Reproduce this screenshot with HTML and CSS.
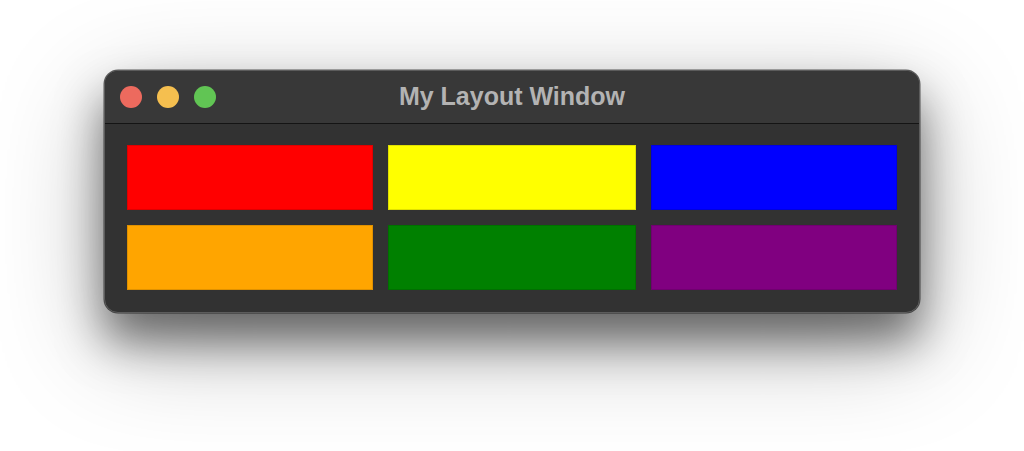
FILE: index.html
```html
<!DOCTYPE html>
<html lang="en">
<head>
<meta charset="utf-8">
<title>My Layout Window</title>
<link rel="stylesheet" href="styles.css">
</head>
<body>
  <div class="window">
    <div class="titlebar">
      <div class="lights">
        <span class="light close"></span>
        <span class="light minimize"></span>
        <span class="light zoom"></span>
      </div>
      <div class="title">My Layout Window</div>
      <div class="spacer"></div>
    </div>
    <div class="content">
      <div class="cell red"></div>
      <div class="cell yellow"></div>
      <div class="cell blue"></div>
      <div class="cell orange"></div>
      <div class="cell green"></div>
      <div class="cell purple"></div>
    </div>
  </div>
</body>
</html>
```

FILE: styles.css
```css
html {
  margin: 0;
  height: 100%;
  background: #ffffff;
}

body {
  margin: 0;
  box-sizing: border-box;
  min-height: 100%;
  padding: 70px 0 0 104px;
  background: #ffffff;
  font-family: "Liberation Sans", Arial, sans-serif;
}

.window {
  box-sizing: border-box;
  width: 816px;
  border: 1px solid #5c5c5c;
  border-radius: 14px;
  background: #323232;
  overflow: hidden;
  box-shadow:
    0 0 0 0.5px rgba(0, 0, 0, 0.6),
    0 28px 45px rgba(0, 0, 0, 0.5),
    0 30px 110px rgba(0, 0, 0, 0.28);
}

.titlebar {
  height: 52px;
  background: #383838;
  border-bottom: 1px solid #141414;
  display: grid;
  grid-template-columns: 1fr auto 1fr;
  align-items: center;
}

.lights {
  display: flex;
  gap: 15px;
  padding-left: 15px;
  align-items: center;
}

.light {
  width: 22px;
  height: 22px;
  border-radius: 50%;
  display: block;
}

.close { background: #ed6a5e; }
.minimize { background: #f5bf4f; }
.zoom { background: #61c554; }

.title {
  color: #b3b3b3;
  font-weight: bold;
  font-size: 25px;
  line-height: 30px;
  margin-top: -2px;
}

.content {
  padding: 21px 22px 22px;
  display: grid;
  grid-template-columns: 246px 248px 246px;
  grid-auto-rows: 65px;
  gap: 15px;
}

.cell {
  box-sizing: border-box;
  border: 1px solid rgba(0, 0, 0, 0.12);
}

.red { background: #ff0000; }
.yellow { background: #ffff00; }
.blue { background: #0000ff; }
.orange { background: #ffa500; }
.green { background: #008000; }
.purple { background: #800080; }
```
